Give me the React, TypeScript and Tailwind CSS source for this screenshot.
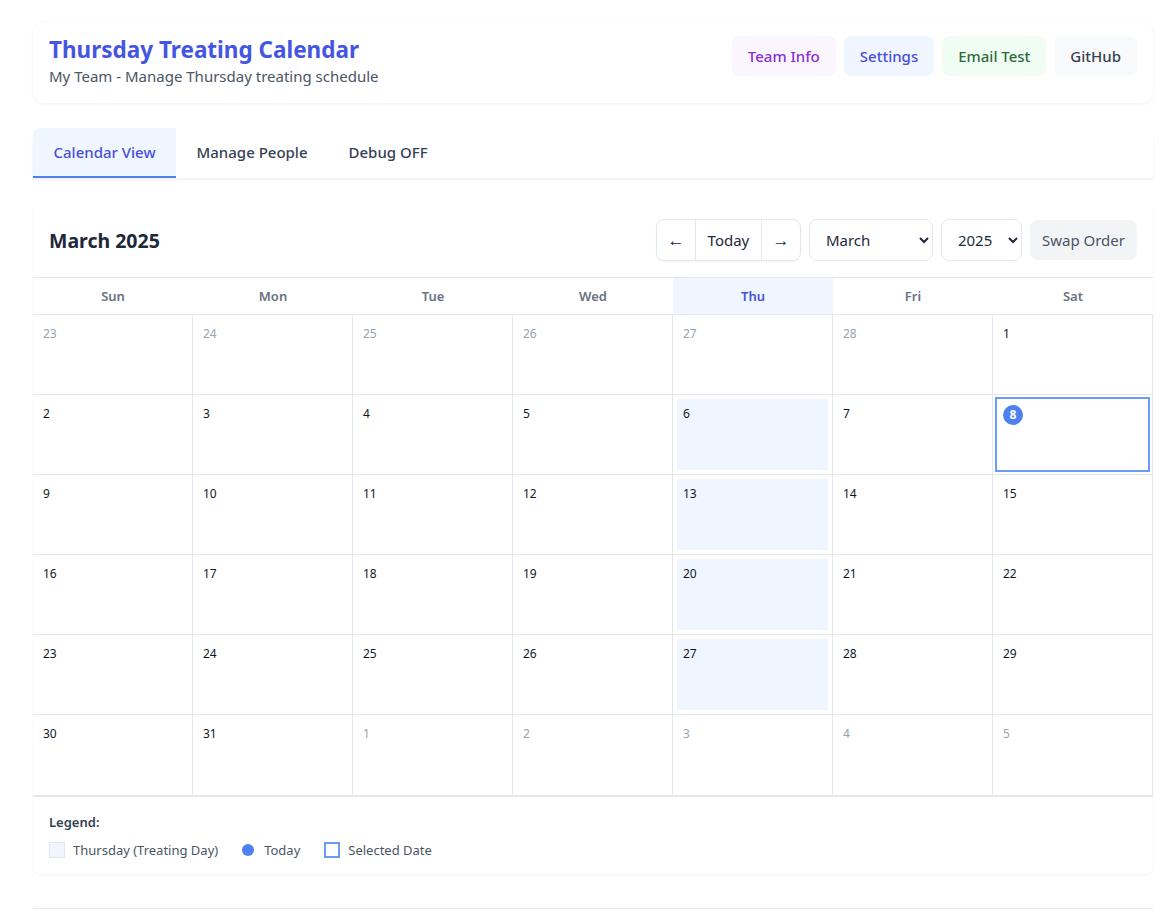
import React, { useState } from "react";

const weekDays = ["Sun", "Mon", "Tue", "Wed", "Thu", "Fri", "Sat"];

const months = [
  "January",
  "February",
  "March",
  "April",
  "May",
  "June",
  "July",
  "August",
  "September",
  "October",
  "November",
  "December",
];

interface DayCell {
  day: number;
  current: boolean;
}

// March 2025 starts on a Saturday
const buildCells = (): DayCell[] => {
  const cells: DayCell[] = [];
  for (let d = 23; d <= 28; d++) cells.push({ day: d, current: false });
  for (let d = 1; d <= 31; d++) cells.push({ day: d, current: true });
  for (let d = 1; d <= 5; d++) cells.push({ day: d, current: false });
  return cells;
};

const HeaderButton: React.FC<{ className: string; children: React.ReactNode }> = ({
  className,
  children,
}) => (
  <button className={`h-10 px-4 rounded-lg text-[15px] font-medium ${className}`}>
    {children}
  </button>
);

const App: React.FC = () => {
  const [tab, setTab] = useState("calendar");
  const today = 8;
  const selected = 8;
  const cells = buildCells();

  return (
    <div
      className="min-h-screen bg-white text-gray-800"
      style={{ fontFamily: '"Noto Sans", "Open Sans", sans-serif' }}
    >
      <div className="w-[1120px] ml-[33px] pt-[22px] pb-8">
        {/* header */}
        <div className="bg-white rounded-xl shadow-[0_1px_4px_rgba(0,0,0,0.06)] flex items-start justify-between px-4 h-[81px]">
          <div className="pt-[12px]">
            <h1 className="text-[22.5px] font-bold text-[#4455e3] leading-8">
              Thursday Treating Calendar
            </h1>
            <p className="text-[15px] text-gray-600 leading-5">
              My Team - Manage Thursday treating schedule
            </p>
          </div>
          <div className="flex gap-2 mt-[14px]">
            <HeaderButton className="bg-[#faf5ff] text-[#8a2fd3]">Team Info</HeaderButton>
            <HeaderButton className="bg-[#eff6ff] text-[#4a4fd8]">Settings</HeaderButton>
            <HeaderButton className="bg-[#f0fdf4] text-[#2f6b3a]">Email Test</HeaderButton>
            <HeaderButton className="bg-[#f9fafb] text-gray-700">GitHub</HeaderButton>
          </div>
        </div>

        {/* tabs */}
        <div className="mt-[25px] flex bg-white rounded-t-lg shadow-[0_2px_3px_rgba(0,0,0,0.06)]">
          {[
            { id: "calendar", label: "Calendar View" },
            { id: "people", label: "Manage People" },
            { id: "debug", label: "Debug OFF" },
          ].map((t) => (
            <button
              key={t.id}
              onClick={() => setTab(t.id)}
              className={`h-[50px] px-[20.5px] text-[15px] font-medium border-b-2 ${
                tab === t.id
                  ? "bg-[#eff6ff] text-[#4a4fd8] border-[#4f7ff0] rounded-tl-lg"
                  : "text-gray-700 border-transparent"
              }`}
            >
              {t.label}
            </button>
          ))}
        </div>

        {/* calendar card */}
        <div className="mt-[25px] bg-white rounded-lg shadow-[0_1px_3px_rgba(0,0,0,0.05)]">
          <div className="flex items-center justify-between px-4 pt-4 pb-4">
            <h2 className="text-[19.5px] font-bold text-gray-800 mt-[2px]">March 2025</h2>
            <div className="flex items-center gap-2">
              <div className="flex h-[42px] border border-gray-200 rounded-lg shadow-[0_1px_2px_rgba(0,0,0,0.05)] text-[15px] text-gray-800">
                <button className="w-[38px] text-[17px]">←</button>
                <button className="w-[67px] border-l border-r border-gray-200">Today</button>
                <button className="w-[38px] text-[17px]">→</button>
              </div>
              <select
                defaultValue="March"
                className="h-[42px] w-[124px] border border-gray-200 rounded-lg px-3 text-[15px] text-gray-800 bg-white"
              >
                {months.map((m) => (
                  <option key={m}>{m}</option>
                ))}
              </select>
              <select
                defaultValue="2025"
                className="h-[42px] w-[81px] border border-gray-200 rounded-lg px-3 text-[15px] text-gray-800 bg-white"
              >
                <option>2024</option>
                <option>2025</option>
                <option>2026</option>
              </select>
              <button className="h-10 px-3 rounded-lg bg-gray-100 text-[15px] text-gray-600">
                Swap Order
              </button>
            </div>
          </div>

          {/* weekday header */}
          <div className="grid grid-cols-7 border-t border-b border-gray-200">
            {weekDays.map((d) => (
              <div
                key={d}
                className={`h-9 flex items-center justify-center text-[13px] font-semibold pt-[2px] ${
                  d === "Thu" ? "bg-[#eff6ff] text-[#4a4fd8]" : "text-gray-500"
                }`}
              >
                {d}
              </div>
            ))}
          </div>

          {/* days */}
          <div className="grid grid-cols-7 border-b-2 border-gray-200">
            {cells.map((c, i) => {
              const isThu = i % 7 === 4;
              const isToday = c.current && c.day === today;
              const isSelected = c.current && c.day === selected;
              return (
                <div
                  key={i}
                  className={`h-20 border-r border-gray-200 ${i < 35 ? "border-b" : ""} ${
                    isSelected ? "p-0.5" : "p-1"
                  }`}
                >
                  <div
                    className={`h-full ${isSelected ? "border-2 border-[#6b9cf5] p-1.5" : "p-1.5"} ${
                      isThu && c.current ? "bg-[#eff6ff]" : ""
                    }`}
                  >
                    {isToday ? (
                      <span className="w-5 h-5 rounded-full bg-[#4f80ef] text-white text-xs font-bold flex items-center justify-center">
                        {c.day}
                      </span>
                    ) : (
                      <span
                        className={`text-xs leading-4 block mt-[1px] ${
                          c.current ? "text-gray-900" : "text-gray-400"
                        }`}
                      >
                        {c.day}
                      </span>
                    )}
                  </div>
                </div>
              );
            })}
          </div>

          {/* legend */}
          <div className="px-4 pt-4 pb-[14px]">
            <div className="text-[13px] font-semibold text-gray-700">Legend:</div>
            <div className="flex items-center gap-6 mt-[8px] text-[13px] text-gray-600">
              <div className="flex items-center gap-2">
                <span className="w-4 h-4 bg-[#eff6ff] border border-gray-200" />
                Thursday (Treating Day)
              </div>
              <div className="flex items-center gap-2.5">
                <span className="w-3 h-3 rounded-full bg-[#4f80ef]" />
                Today
              </div>
              <div className="flex items-center gap-2">
                <span className="w-4 h-4 border-2 border-[#6b9cf5]" />
                Selected Date
              </div>
            </div>
          </div>
        </div>

        {/* footer rule */}
        <div className="mt-[34px] border-t border-gray-200 h-10" />
      </div>
    </div>
  );
};

export default App;
